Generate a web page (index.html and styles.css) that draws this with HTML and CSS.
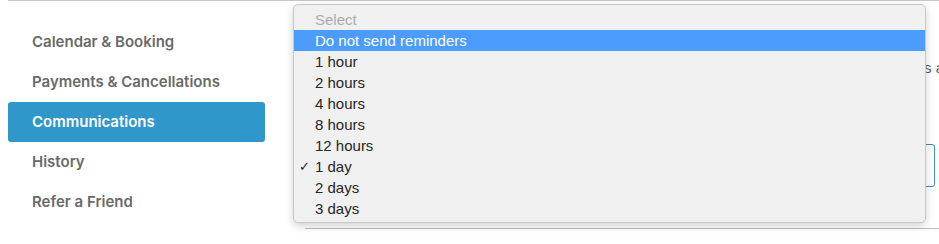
FILE: index.html
```html
<!DOCTYPE html>
<html>
<head>
<meta charset="utf-8">
<link rel="stylesheet" href="styles.css">
</head>
<body>
<div class="page">
  <nav class="sidebar">
    <a class="nav-item">Calendar &amp; Booking</a>
    <a class="nav-item">Payments &amp; Cancellations</a>
    <a class="nav-item active">Communications</a>
    <a class="nav-item">History</a>
    <a class="nav-item">Refer a Friend</a>
  </nav>
  <main class="main">
    <p class="desc">Clients receive reminders a</p>
    <div class="field"></div>
    <div class="divider"></div>
  </main>
  <div class="menu">
    <div class="opt placeholder">Select</div>
    <div class="opt selected">Do not send reminders</div>
    <div class="opt">1 hour</div>
    <div class="opt">2 hours</div>
    <div class="opt">4 hours</div>
    <div class="opt">8 hours</div>
    <div class="opt">12 hours</div>
    <div class="opt checked"><span class="check">✓</span>1 day</div>
    <div class="opt">2 days</div>
    <div class="opt">3 days</div>
  </div>
</div>
</body>
</html>
```
FILE: styles.css
```css
html, body {
  margin: 0;
  padding: 0;
  background: #ffffff;
  overflow: hidden;
}
body {
  width: 939px;
  height: 244px;
}
.page {
  position: relative;
  margin-left: 8px;
  border-top: 1px solid #c3c7cb;
  display: flex;
  height: 243px;
}
.sidebar {
  width: 257px;
  flex: none;
  display: flex;
  flex-direction: column;
  padding-top: 21px;
}
.nav-item {
  display: block;
  height: 40px;
  line-height: 40px;
  padding-left: 24px;
  font-family: Inter, "Noto Sans", sans-serif;
  font-weight: 600;
  font-size: 15px;
  color: #6a6a6a;
  border-radius: 3px;
}
.nav-item.active {
  background: #3097cb;
  color: #ffffff;
}
.main {
  flex: 1;
  padding-left: 40px;
  padding-right: 4px;
  min-width: 0;
  font-family: "Liberation Sans", Arial, sans-serif;
}
.desc {
  margin: 57px -9px 0 0;
  height: 20px;
  line-height: 20px;
  white-space: nowrap;
  text-align: right;
  font-size: 15px;
  color: #5a5a5a;
}
.field {
  margin-top: 66px;
  height: 41px;
  border: 1px solid #3a8fc8;
  border-radius: 3px;
}
.divider {
  margin-top: 41px;
  margin-right: -4px;
  border-top: 1px solid #b8bec4;
}
.menu {
  position: absolute;
  left: 285px;
  top: 3px;
  width: 631px;
  padding: 4px 0 3px;
  background: #f0f0f0;
  border: 1px solid #c9c9c9;
  border-radius: 5px;
  box-shadow: 0 3px 8px rgba(0, 0, 0, 0.18);
  font-family: "Liberation Sans", Arial, sans-serif;
  font-size: 15px;
  color: #262626;
}
.opt {
  position: relative;
  height: 21px;
  line-height: 21px;
  padding-left: 21px;
}
.opt.placeholder {
  color: #ababab;
}
.opt.selected {
  background: #4b9cfd;
  color: #ffffff;
}
.check {
  position: absolute;
  left: 5px;
  top: 0;
  font-size: 13px;
  font-family: "DejaVu Sans", sans-serif;
}
```
